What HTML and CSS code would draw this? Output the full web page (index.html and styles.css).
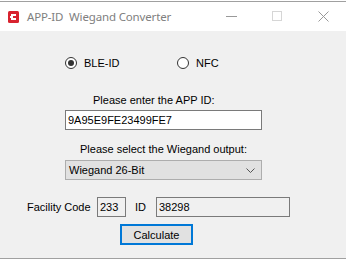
FILE: index.html
```
<!DOCTYPE html>
<html lang="en">
<head>
<meta charset="UTF-8">
<title>APP-ID  Wiegand Converter</title>
<link rel="stylesheet" href="styles.css">
</head>
<body>

<div class="window">
    <div class="titlebar">
        <svg class="appIcon" width="11" height="12" viewBox="0 0 11 12">
            <rect x="0" y="0" width="11" height="12" rx="1.5" fill="#d8232f"/>
            <path d="M3 3h5v2h-3v2h3v2h-5z" fill="#fff"/>
            <rect x="2" y="5" width="1" height="2" fill="#fff"/>
        </svg>
        <span class="title">APP-ID&nbsp; Wiegand Converter</span>
        <div class="controls">
            <div class="ctrl">
                <svg width="11" height="11" viewBox="0 0 11 11"><path d="M0 5.5h11" stroke="#999" stroke-width="1"/></svg>
            </div>
            <div class="ctrl">
                <svg width="11" height="11" viewBox="0 0 11 11"><rect x="0.5" y="0.5" width="9" height="9" fill="none" stroke="#d6d6d6"/></svg>
            </div>
            <div class="ctrl">
                <svg width="11" height="11" viewBox="0 0 11 11"><path d="M0.5 0.5l10 10M10.5 0.5l-10 10" stroke="#999" stroke-width="1"/></svg>
            </div>
        </div>
    </div>

    <div class="client">
        <div class="radioRow">
            <label class="option">
                <span class="radio checked"></span>
                <span>BLE-ID</span>
            </label>
            <label class="option">
                <span class="radio"></span>
                <span>NFC</span>
            </label>
        </div>

        <div class="caption first">Please enter the APP ID:</div>
        <div class="textbox wide">9A95E9FE23499FE7</div>

        <div class="caption second">Please select the Wiegand output:</div>
        <div class="dropdown">
            <span>Wiegand 26-Bit</span>
            <svg width="9" height="5" viewBox="0 0 9 5"><path d="M0.5 0.5l4 4 4-4" fill="none" stroke="#555" stroke-width="1"/></svg>
        </div>

        <div class="resultRow">
            <span class="fcLabel">Facility Code</span>
            <div class="textbox readonly fc">233</div>
            <span class="idLabel">ID</span>
            <div class="textbox readonly idBox">38298</div>
        </div>

        <button class="calcButton">Calculate</button>
    </div>
</div>

</body>
</html>
```

FILE: styles.css
```
html, body {
    margin: 0;
    padding: 0;
    background: #fff;
}
.window {
    width: 346px;
    height: 260px;
    padding-top: 1px;
    box-sizing: border-box;
    overflow: hidden;
}
.titlebar {
    height: 29px;
    border-top: 1px solid #a0a0a0;
    display: flex;
    align-items: center;
    background: #fff;
}
.appIcon {
    margin-left: 8px;
    margin-top: 1px;
}
.title {
    margin-left: 8px;
    font-family: 'Noto Sans', sans-serif;
    font-size: 11.5px;
    letter-spacing: -0.15px;
    color: #808080;
    white-space: pre;
}
.controls {
    margin-left: auto;
    display: flex;
    height: 29px;
}
.ctrl {
    width: 46px;
    display: flex;
    align-items: center;
    justify-content: center;
}
.client {
    height: 228px;
    box-sizing: border-box;
    background: #f0f0f0;
    border-bottom: 1px solid #a0a0a0;
    padding-top: 24px;
    font-family: 'Liberation Sans', Arial, sans-serif;
    font-size: 11px;
    color: #000;
}
.radioRow {
    display: flex;
    align-items: center;
    height: 16px;
    padding-left: 65px;
}
.option {
    display: flex;
    align-items: center;
    gap: 7px;
    width: 112px;
}
.radio {
    width: 12px;
    height: 12px;
    box-sizing: border-box;
    border: 1px solid #333;
    border-radius: 50%;
    background: #fff;
    display: flex;
    align-items: center;
    justify-content: center;
}
.radio.checked::after {
    content: "";
    width: 6px;
    height: 6px;
    border-radius: 50%;
    background: #333;
}
.caption {
    height: 13px;
    line-height: 13px;
}
.caption.first {
    margin-top: 23px;
    padding-left: 93px;
}
.caption.second {
    margin-top: 13px;
    padding-left: 80px;
}
.textbox {
    height: 20px;
    box-sizing: border-box;
    border: 1px solid #7a7a7a;
    background: #fff;
    padding-left: 2px;
    line-height: 18px;
}
.textbox.wide {
    margin-top: 3px;
    margin-left: 65px;
    width: 197px;
}
.textbox.readonly {
    background: #f0f0f0;
}
.dropdown {
    margin-top: 4px;
    margin-left: 65px;
    width: 197px;
    height: 20px;
    box-sizing: border-box;
    border: 1px solid #adadad;
    background: #e1e1e1;
    display: flex;
    align-items: center;
    justify-content: space-between;
    padding: 0 6px 0 3px;
}
.resultRow {
    margin-top: 17px;
    display: flex;
    align-items: center;
    padding-left: 27px;
}
.fcLabel {
    width: 70px;
}
.fc {
    width: 29px;
}
.idLabel {
    margin-left: 9px;
    width: 21px;
}
.idBox {
    width: 134px;
}
.calcButton {
    display: block;
    margin-top: 7px;
    margin-left: 120px;
    width: 73px;
    height: 21px;
    padding: 0;
    border: 2px solid #0078d7;
    background: #e1e1e1;
    font-family: 'Liberation Sans', Arial, sans-serif;
    font-size: 11px;
    color: #000;
}
```
